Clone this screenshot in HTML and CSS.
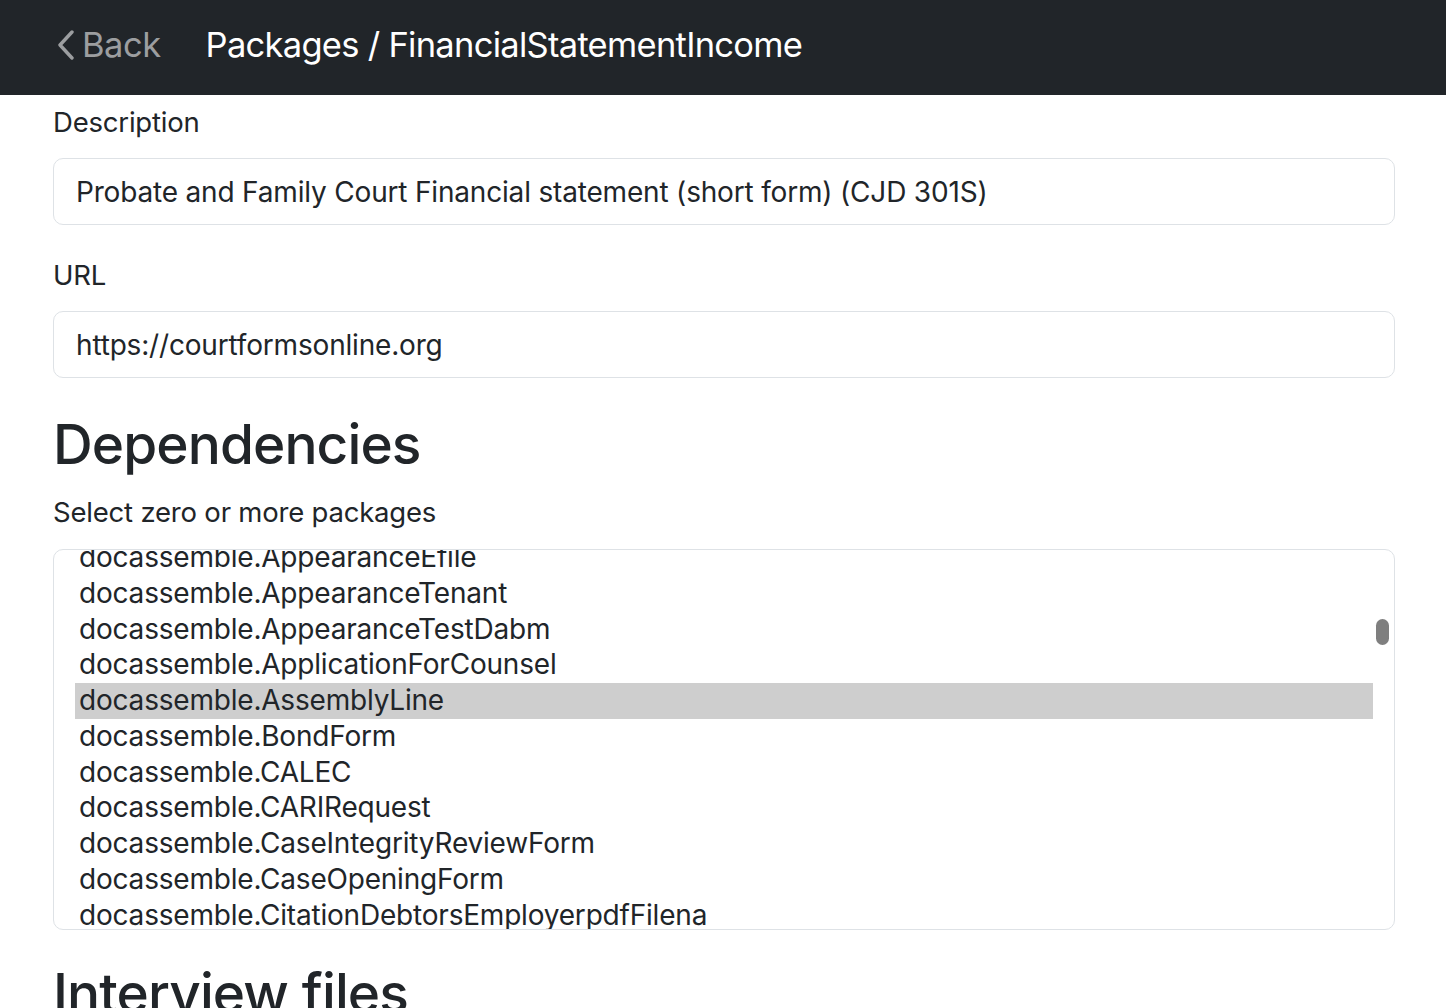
FILE: index.html
```html
<!DOCTYPE html>
<html>
<head>
<meta charset="utf-8">
<link rel="stylesheet" href="styles.css">
</head>
<body>
<nav class="navbar">
  <a class="back" href="#">
    <svg class="chev" width="20" height="30" viewBox="0 0 20 30"><path d="M16 2 L4 15 L16 28" fill="none" stroke="currentColor" stroke-width="3.4" stroke-linecap="round" stroke-linejoin="round"/></svg>
    <span>Back</span>
  </a>
  <span class="brand">Packages / FinancialStatementIncome</span>
</nav>
<main class="container">
  <label class="label">Description</label>
  <div class="input">Probate and Family Court Financial statement (short form) (CJD 301S)</div>
  <label class="label">URL</label>
  <div class="input">https://courtformsonline.org</div>
  <h2 class="heading">Dependencies</h2>
  <label class="label sub">Select zero or more packages</label>
  <div class="select">
    <ul class="options">
      <li>docassemble.AppearanceEfile</li>
      <li>docassemble.AppearanceTenant</li>
      <li>docassemble.AppearanceTestDabm</li>
      <li>docassemble.ApplicationForCounsel</li>
      <li class="selected">docassemble.AssemblyLine</li>
      <li>docassemble.BondForm</li>
      <li>docassemble.CALEC</li>
      <li>docassemble.CARIRequest</li>
      <li>docassemble.CaseIntegrityReviewForm</li>
      <li>docassemble.CaseOpeningForm</li>
      <li>docassemble.CitationDebtorsEmployerpdfFilena</li>
      <li>docassemble.CitationForm</li>
    </ul>
    <div class="thumb"></div>
  </div>
  <h2 class="heading">Interview files</h2>
</main>
</body>
</html>
```
FILE: styles.css
```css
html, body {
  margin: 0;
  padding: 0;
  background: #ffffff;
  font-family: Inter, "Noto Sans", sans-serif;
  color: #212529;
  overflow: hidden;
}
.navbar {
  height: 95px;
  background: #212529;
  display: flex;
  align-items: center;
  padding: 0 0 6px 56px;
  box-sizing: border-box;
}
.back {
  display: flex;
  align-items: center;
  gap: 6px;
  color: #9c9ea0;
  text-decoration: none;
  font-size: 34.5px;
  letter-spacing: -0.5px;
}
.chev {
  display: block;
}
.brand {
  margin-left: 45px;
  color: #ffffff;
  font-size: 34.5px;
  letter-spacing: -0.72px;
}
.container {
  padding: 7px 51px 0 53px;
  display: flex;
  flex-direction: column;
}
.label {
  display: block;
  font-size: 27.5px;
  line-height: 41px;
  margin-bottom: 15px;
  letter-spacing: -0.2px;
}
.input {
  height: 67px;
  box-sizing: border-box;
  border: 1.5px solid #dee2e6;
  border-radius: 10px;
  padding: 0 22px;
  display: flex;
  align-items: center;
  font-size: 28px;
  letter-spacing: -0.18px;
  margin-bottom: 30px;
}
.heading {
  font-size: 55px;
  font-weight: 500;
  line-height: 66px;
  margin: 3px 0 15px;
  letter-spacing: -0.9px;
}
.label.sub {
  margin-bottom: 16px;
}
.select {
  position: relative;
  height: 381px;
  box-sizing: border-box;
  border: 1.5px solid #dee2e6;
  border-radius: 10px;
  overflow: hidden;
  padding: 0 21px 0 21px;
}
.options {
  list-style: none;
  margin: -10px 0 0 0;
  padding: 0;
}
.options li {
  height: 35.75px;
  line-height: 35.75px;
  padding-left: 4px;
  font-size: 28px;
  letter-spacing: -0.2px;
  white-space: nowrap;
}
.options li.selected {
  background: #cecece;
}
.thumb {
  position: absolute;
  right: 5px;
  top: 69px;
  width: 13px;
  height: 26px;
  border-radius: 7px;
  background: #7f7f7f;
}
.select + .heading {
  margin-top: 30px;
}
```
